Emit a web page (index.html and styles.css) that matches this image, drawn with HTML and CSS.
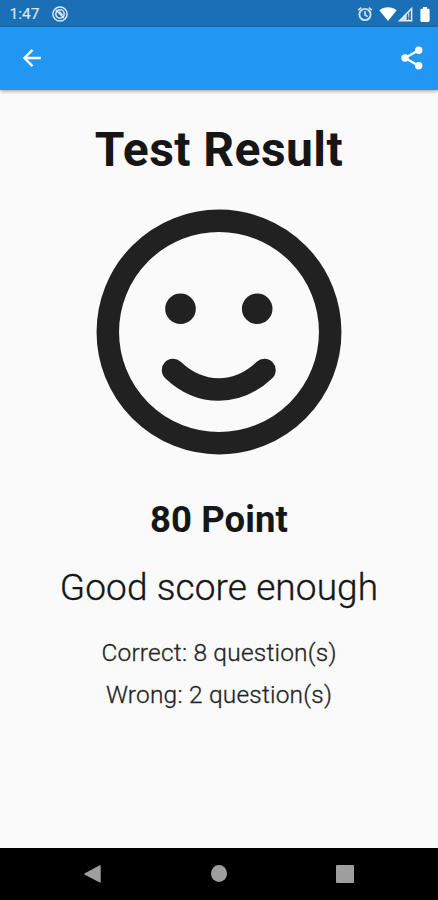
FILE: index.html
```html
<!DOCTYPE html>
<html lang="en">
<head>
<meta charset="utf-8">
<title>Test Result</title>
<link rel="stylesheet" href="styles.css">
</head>
<body>
<div class="screen">
  <div class="status">
    <span class="clock">1:47</span>
    <svg class="disc" viewBox="0 0 16 16" width="16" height="16" fill="none" stroke="#dce9f5">
      <circle cx="8" cy="8" r="7.1" stroke-width="1.5"/>
      <circle cx="8" cy="8" r="4.2" stroke-width="1.5"/>
      <path d="M4 4l8 8M7 5.500l3.500 3.500" stroke-width="1.600"/>
    </svg>
    <svg class="alarm" viewBox="0 0 16 16" width="16" height="16" fill="none" stroke="#cfe2f3">
      <circle cx="8" cy="8.5" r="5.6" stroke-width="1.9"/>
      <path d="M1.2 4.2l3-2.6M14.8 4.2l-3-2.6M8 5v4l2.7 1.6" stroke-width="1.6"/>
    </svg>
    <svg class="wifi" viewBox="0 0 18 14" width="18" height="14" fill="#fff"><path d="M9 14L.3 3.2C5.200-.8 12.800-.8 17.700 3.200z"/></svg>
    <svg class="signal" viewBox="0 0 15 15" width="15" height="15">
      <path d="M13.600 1.500V13.700H1.600z" fill="none" stroke="#e2edf7" stroke-width="1.500"/>
      <path d="M1 14L8.700 6.300V14z" fill="#d5e5f3"/>
      <path d="M10.700 6v4.500M10.700 11.700v1.500" stroke="#d5e5f3" stroke-width="1"/>
    </svg>
    <svg class="battery" viewBox="0 0 10 15" width="10" height="15" fill="#fff"><path d="M3 0h4v1.700h1.500q1.100 0 1.100 1.100v11q0 1.100-1.100 1.100h-7Q.4 14.900.4 13.800v-11Q.4 1.700 1.500 1.700H3z"/></svg>
  </div>
  <header class="bar">
    <svg class="back" viewBox="0 0 18 18" width="18" height="18" fill="none" stroke="#fff" stroke-width="2.300"><path d="M17.800 9H2M9.500.9L1.400 9l8.100 8.100"/></svg>
    <svg class="share" viewBox="0 0 22 24" width="22" height="24">
      <path d="M18 4L4 12l14 8" fill="none" stroke="#fff" stroke-width="2.200"/>
      <g fill="#fff"><circle cx="17.700" cy="4.300" r="3.700"/><circle cx="4" cy="12" r="3.700"/><circle cx="17.700" cy="19.700" r="3.700"/></g>
    </svg>
  </header>
  <main>
    <h1>Test Result</h1>
    <svg class="face" viewBox="0 0 245 245" width="245" height="245">
      <circle cx="122" cy="122" r="111.200" fill="none" stroke="#212121" stroke-width="22.500"/>
      <circle cx="83.500" cy="98.800" r="15.300" fill="#212121"/>
      <circle cx="160.200" cy="98.800" r="15.300" fill="#212121"/>
      <path d="M76 160Q96.500 179.500 121.800 179.500T167.500 160" fill="none" stroke="#212121" stroke-width="22.500" stroke-linecap="round"/>
    </svg>
    <h2>80 Point</h2>
    <p class="remark">Good score enough</p>
    <p class="count">Correct: 8 question(s)</p>
    <p class="count wrong">Wrong: 2 question(s)</p>
  </main>
  <nav>
    <svg class="nav-back" viewBox="0 0 17 18" width="17" height="18" fill="#9e9e9e"><path d="M.8 8.200L15.800.3q.9-.4.9.6v16.200q0 1-.9.500L.8 9.800q-1.200-.8 0-1.600z"/></svg>
    <span class="home"></span>
    <span class="recent"></span>
  </nav>
</div>
</body>
</html>
```
FILE: styles.css
```css
* { box-sizing: border-box; }
body { margin: 0; font-family: Roboto, sans-serif; color: #161616; }
.screen { width: 438px; height: 900px; display: flex; flex-direction: column; background: #fafafa; overflow: hidden; }
.status { height: 27px; flex: none; display: flex; align-items: center; background: #1a6fb5; padding: 1px 8px 0 9.500px; }
.clock { width: 42.500px; font-size: 15.500px; line-height: 26px; color: #d9e8f5; -webkit-text-stroke: .2px; }
.alarm { margin-left: auto; }
.wifi { margin-left: 6px; }
.signal { margin-left: 1px; }
.battery { margin-left: 7px; }
.bar { height: 62.500px; flex: none; display: flex; align-items: center; justify-content: space-between; padding: 0 15px 0 23px; background: #2196f3; box-shadow: 0 1px 4px rgba(0, 0, 0, .4); }
main { flex: 1; display: flex; flex-direction: column; align-items: center; padding-top: 32.500px; }
h1, h2, p { margin: 0; white-space: nowrap; }
h1 { font-size: 48px; line-height: 56px; font-weight: 700; letter-spacing: .45px; }
.face { margin-top: 32px; overflow: visible; }
h2 { margin-top: 42.500px; font-size: 36.500px; line-height: 44px; font-weight: 700; letter-spacing: .1px; }
.remark { margin-top: 24px; font-size: 37px; line-height: 44px; font-weight: 300; letter-spacing: .1px; -webkit-text-stroke: .35px; }
.count { margin-top: 28.500px; font-size: 24.500px; line-height: 30px; font-weight: 300; letter-spacing: .2px; -webkit-text-stroke: .3px; color: #242424; }
.wrong { margin-top: 12px; }
nav { height: 52.500px; flex: none; display: flex; align-items: center; justify-content: space-between; padding: 0 84px; background: #000; }
.home { width: 16px; height: 17px; border-radius: 50%; background: #9e9e9e; }
.recent { width: 18px; height: 18px; border-radius: 1px; background: #9e9e9e; }
```
